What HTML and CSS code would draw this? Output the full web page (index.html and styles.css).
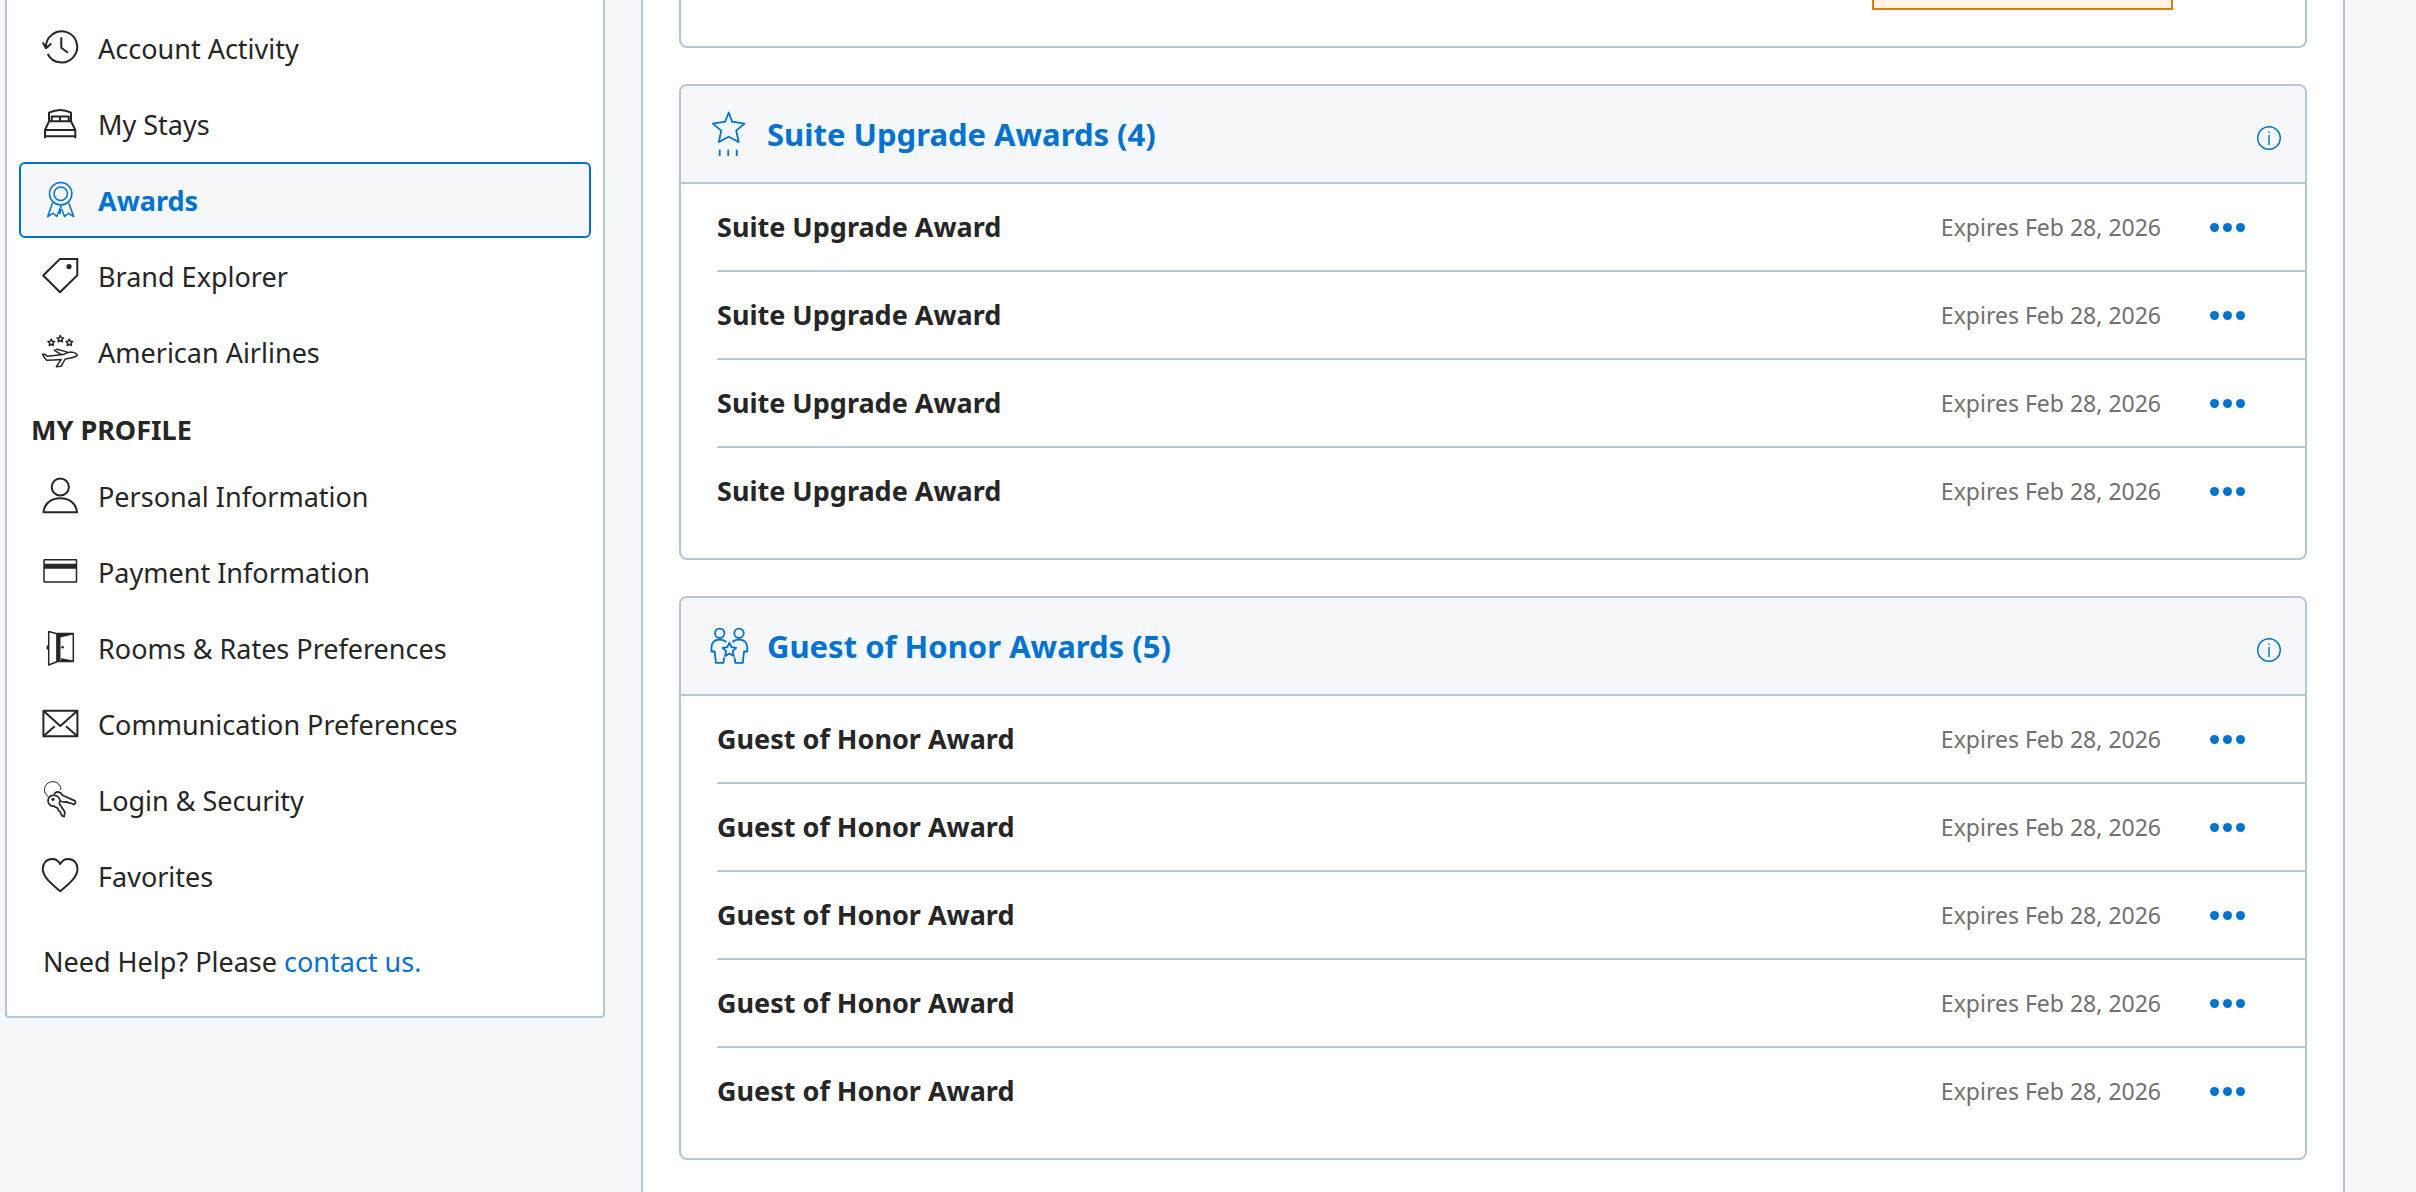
FILE: index.html
```html
<!DOCTYPE html>
<html lang="en">
<head>
    <meta charset="UTF-8">
    <meta name="viewport" content="width=device-width, initial-scale=1.0">
    <title>Awards</title>
    <link rel="stylesheet" href="styles.css">
</head>
<body>
    <div class="page">
        <aside class="sidebar">
            <nav>
                <ul class="nav-list">
                    <li><a class="nav-link" href="#activity">
                        <svg class="nav-icon" viewBox="0 0 36 36"><path d="M4 17.7A15.6 15.6 0 1 1 5.7 24"/><path d="M.8 12.4 4 18.2l5.3-4.8M19.3 7.3v10.4l6.6 5"/></svg>
                        Account Activity</a></li>
                    <li><a class="nav-link" href="#stays">
                        <svg class="nav-icon" viewBox="0 0 36 36"><path d="M7 15.3V6.7q11.5-5.5 22 0v8.6M9.7 15v-4.5h17V15M18 10.5V15M7 15.3h22L33.3 24v8.3M7 15.3 3 24v8.3M3 24h30.300M3 30.300h30.300"/></svg>
                        My Stays</a></li>
                    <li><a class="nav-link active" href="#awards" aria-current="page">
                        <svg class="nav-icon thin" viewBox="0 0 36 36"><circle cx="18.700" cy="11.700" r="11.200"/><circle cx="18.700" cy="11.700" r="6.700"/><path d="M10.500 21 5.700 34.500l5.300-3.200 3.700 3.200 5-11.500M26.800 21l4.900 13.500-5.300-3.200-3.800 3.200-2.900-7.500M18.300 27v4.500l-1.500-1.500"/></svg>
                        Awards</a></li>
                    <li><a class="nav-link" href="#brands">
                        <svg class="nav-icon" viewBox="0 0 36 36"><path d="M18 .9h17.300v16.400L18 34.200 1.200 17.500z"/><circle class="solid" cx="27" cy="8.500" r="2.600"/></svg>
                        Brand Explorer</a></li>
                    <li><a class="nav-link" href="#airlines">
                        <svg class="nav-icon thin" viewBox="0 0 36 36"><path id="tinyStar" d="m9.300 5.100 1 2.200 2.300.2-1.700 1.600.5 2.400-2.100-1.200-2.100 1.200.5-2.400L6 7.500l2.300-.2z"/><use href="#tinyStar" x="9" y="-3.600"/><use href="#tinyStar" x="18"/><path d="M.6 20.300H3l2.700 2L21 20.600q5-2.300 8-2.500 5.200.4 6.300 3.200-3 2.300-12.100 3.700L19 32.300l-4.700.4 4.900-7.300q-8 .6-14.500.9Q2 24 .6 20.300zM19.500 20.700l-7.200-4.300 3-1.100 10.700 3.100"/></svg>
                        American Airlines</a></li>
                </ul>
                <h2 class="nav-heading">MY PROFILE</h2>
                <ul class="nav-list">
                    <li><a class="nav-link" href="#personal">
                        <svg class="nav-icon" viewBox="0 0 36 36"><circle cx="18.300" cy="9" r="8.600"/><path d="M1.500 34.300C2.300 25.500 9 20.300 18.300 20.300S34.200 25.500 35 34.300z"/></svg>
                        Personal Information</a></li>
                    <li><a class="nav-link" href="#payment">
                        <svg class="nav-icon thin" viewBox="0 0 36 36"><rect x="2" y="5.700" width="32.500" height="22.300" rx=".5"/><path class="solid" d="M2 9.700h32.500v5H2z"/></svg>
                        Payment Information</a></li>
                    <li><a class="nav-link" href="#rooms">
                        <svg class="nav-icon thin" viewBox="0 0 36 36"><path d="m6.700 1.500 8.300 2.200v28l-8.300 3.300zM15 3.500h16.300v28H15M5.400 15.500v4"/><path class="solid" d="M14.500 3.500h4v28h-4zM18 3h13.500v1.600L18 7.600zM18 32h13.500v-1.600L18 28z"/><circle class="solid" cx="20.500" cy="17.300" r="1.300"/></svg>
                        Rooms &amp; Rates Preferences</a></li>
                    <li><a class="nav-link" href="#communication">
                        <svg class="nav-icon" viewBox="0 0 36 36"><path d="M1.400 4.800h34v25.400h-34zL18.300 20 35.400 4.800M1.400 30.200 12.700 20.300M35.400 30.200 24 20.300"/></svg>
                        Communication Preferences</a></li>
                    <li><a class="nav-link" href="#login">
                        <svg class="nav-icon" viewBox="0 0 36 36"><path stroke-width="1" d="M6.400 14.800A8.200 8.200 0 1 1 18.900 8"/><path stroke-width="1.700" d="M12 24.200C7.500 24.500 5.300 20.500 6.300 17s4.700-4.500 8-3.200 4.500 4.800 3 8l5.500 8-.6 4.800-2.200-.8-2.200-4.400-1-.4-1.200-2.800zM12 12l2.500-2q4-.5 6 3.300l12.500 5.600.6 2-2 1.700-3-1.500-2-.1-1.700-1.200-2.300.4-4.700-1.200"/><circle class="solid" cx="11" cy="17.300" r="1.600"/></svg>
                        Login &amp; Security</a></li>
                    <li><a class="nav-link" href="#favorites">
                        <svg class="nav-icon" viewBox="0 0 36 36"><path d="M18.200 6C16.500 2.700 13.700.9 10.200.9 4.300.9.800 5.500.8 11c0 7.700 8.200 14.700 17.400 22.200C27.500 25.700 35.500 18.700 35.500 11c0-5.500-3.500-10.100-9.300-10.100-3.500 0-6.300 1.800-8 5.100z"/></svg>
                        Favorites</a></li>
                </ul>
            </nav>
            <p class="help">Need Help? Please <a href="#contact">contact us.</a></p>
        </aside>

        <main class="content">
            <section class="card card-top">
                <div class="notice"></div>
            </section>

            <section class="card">
                <header class="card-header">
                    <svg class="card-icon" viewBox="0 0 40 46"><path d="m19.700 1.500 3.400 9.200 12.400 1.900-8.300 7 2.500 11.400-10-5.300L9.900 31l2.300-11.400-8.300-7 12.300-1.900zM10.700 38.800v6.200M19.200 38.800v6.200M27.700 38.800v6.200"/></svg>
                    <h2 class="card-title">Suite Upgrade Awards (4)</h2>
                    <button class="info" type="button" aria-label="About Suite Upgrade Awards">
                        <svg viewBox="0 0 24 24"><circle cx="12" cy="12" r="11.300"/><path d="M12 9v10M12 5.500v1.500"/></svg>
                    </button>
                </header>
                <ul class="awards">
                    <li class="award">
                        <h3 class="award-name">Suite Upgrade Award</h3>
                        <span class="expires">Expires Feb 28, 2026</span>
                        <button class="more" type="button" aria-label="More options"><i></i><i></i><i></i></button>
                    </li>
                    <li class="award">
                        <h3 class="award-name">Suite Upgrade Award</h3>
                        <span class="expires">Expires Feb 28, 2026</span>
                        <button class="more" type="button" aria-label="More options"><i></i><i></i><i></i></button>
                    </li>
                    <li class="award">
                        <h3 class="award-name">Suite Upgrade Award</h3>
                        <span class="expires">Expires Feb 28, 2026</span>
                        <button class="more" type="button" aria-label="More options"><i></i><i></i><i></i></button>
                    </li>
                    <li class="award">
                        <h3 class="award-name">Suite Upgrade Award</h3>
                        <span class="expires">Expires Feb 28, 2026</span>
                        <button class="more" type="button" aria-label="More options"><i></i><i></i><i></i></button>
                    </li>
                </ul>
            </section>

            <section class="card">
                <header class="card-header">
                    <svg class="card-icon" viewBox="0 -5 40 46"><g id="guest"><circle cx="10.700" cy="5.300" r="4.700"/><path d="M17.300 14.200q-2.300-2.500-6.600-2.500Q2.500 11.700 2.500 20v3.500h3.200L6.900 34.800h7.500l.8-5.500"/></g><use href="#guest" transform="matrix(-1 0 0 1 40.700 0)"/><path d="m20.400 14.700 2.100 4.500 4.700.6-3.500 3.300 1 4.900-4.300-2.400-4.300 2.400 1-4.900-3.500-3.300 4.700-.6z"/></svg>
                    <h2 class="card-title">Guest of Honor Awards (5)</h2>
                    <button class="info" type="button" aria-label="About Guest of Honor Awards">
                        <svg viewBox="0 0 24 24"><circle cx="12" cy="12" r="11.300"/><path d="M12 9v10M12 5.500v1.500"/></svg>
                    </button>
                </header>
                <ul class="awards">
                    <li class="award">
                        <h3 class="award-name">Guest of Honor Award</h3>
                        <span class="expires">Expires Feb 28, 2026</span>
                        <button class="more" type="button" aria-label="More options"><i></i><i></i><i></i></button>
                    </li>
                    <li class="award">
                        <h3 class="award-name">Guest of Honor Award</h3>
                        <span class="expires">Expires Feb 28, 2026</span>
                        <button class="more" type="button" aria-label="More options"><i></i><i></i><i></i></button>
                    </li>
                    <li class="award">
                        <h3 class="award-name">Guest of Honor Award</h3>
                        <span class="expires">Expires Feb 28, 2026</span>
                        <button class="more" type="button" aria-label="More options"><i></i><i></i><i></i></button>
                    </li>
                    <li class="award">
                        <h3 class="award-name">Guest of Honor Award</h3>
                        <span class="expires">Expires Feb 28, 2026</span>
                        <button class="more" type="button" aria-label="More options"><i></i><i></i><i></i></button>
                    </li>
                    <li class="award">
                        <h3 class="award-name">Guest of Honor Award</h3>
                        <span class="expires">Expires Feb 28, 2026</span>
                        <button class="more" type="button" aria-label="More options"><i></i><i></i><i></i></button>
                    </li>
                </ul>
            </section>
        </main>
    </div>
</body>
</html>
```

FILE: styles.css
```css
* {
    box-sizing: border-box;
}

body {
    margin: 0;
    font-family: "Noto Sans", sans-serif;
    font-size: 27px;
    line-height: 36px;
    color: #262626;
    background-color: #f5f7fb;
}

h2, h3, p, ul {
    margin: 0;
    padding: 0;
}

ul {
    list-style: none;
}

a {
    color: #0072d2;
    text-decoration: none;
}

button {
    padding: 0;
    border: none;
    background: none;
    color: #0072d2;
    cursor: pointer;
}

svg {
    display: block;
    fill: none;
    stroke: currentColor;
    stroke-width: 2;
    stroke-linejoin: round;
}

.page {
    display: flex;
    align-items: flex-start;
    gap: 36px;
    min-height: 100vh;
    padding: 0 71px 0 5px;
}

/* Left menu */
.sidebar {
    flex: 0 0 600px;
    padding: 10px 12px 36px;
    background-color: white;
    border: 2px solid #b1c6d8;
    border-top: none;
    border-radius: 0 0 4px 4px;
}

.nav-link {
    display: flex;
    align-items: center;
    gap: 20px;
    height: 76px;
    padding: 2px 21px 0;
    border: 2px solid transparent;
    border-radius: 6px;
    color: #262626;
}

.nav-link.active {
    border-color: #0072d2;
    background-color: #f5f7fb;
    color: #0072d2;
    font-weight: bold;
}

.nav-icon {
    flex: none;
    width: 36px;
    height: 36px;
    margin-bottom: 2px;
    overflow: visible;
}

.thin {
    stroke-width: 1.5;
}

.solid {
    fill: currentColor;
    stroke: none;
}

.nav-heading {
    padding: 22px 12px 10px;
    font-size: 27px;
    line-height: 36px;
}

.help {
    padding: 30px 24px 0;
}

/* Award cards */
.content {
    flex: 1;
    min-height: 100vh;
    padding: 0 36px 32px;
    background-color: white;
    border: 2px solid #b1c6d8;
    border-width: 0 2px;
}

.card {
    margin-bottom: 36px;
    border: 2px solid #b1c6d8;
    border-radius: 8px;
    overflow: hidden;
}

.card:last-child {
    margin-bottom: 0;
}

.card-top {
    display: flex;
    justify-content: flex-end;
    padding: 0 132px 36px;
    border-top: none;
    border-radius: 0 0 8px 8px;
}

.notice {
    width: 301px;
    height: 10px;
    border: 2px solid #d97a1a;
    border-top: none;
    background-color: #fff3e1;
}

.card-header {
    display: flex;
    align-items: center;
    gap: 18px;
    height: 98px;
    padding: 0 24px 0 28px;
    background-color: #f5f7fb;
    border-bottom: 2px solid #b1c6d8;
}

.card-icon {
    flex: none;
    width: 40px;
    height: 46px;
    color: #0072d2;
    stroke-width: 1.8;
}

.card-title {
    flex: 1;
    font-size: 31px;
    line-height: 40px;
    color: #0072d2;
}

.info {
    padding-top: 8px;
}

.info svg {
    width: 24px;
    height: 24px;
    stroke-width: 1.4;
}

.awards {
    padding: 0 0 24px 36px;
}

.award {
    display: flex;
    align-items: center;
    height: 88px;
    padding-right: 60px;
    border-bottom: 2px solid #b1c6d8;
}

.award:last-child {
    height: 86px;
    border-bottom: none;
}

.award-name {
    flex: 1;
    font-size: 27px;
}

.expires {
    margin-right: 49px;
    font-size: 23px;
    color: #707070;
}

.more {
    display: flex;
    gap: 4px;
}

.more i {
    width: 9px;
    height: 9px;
    border-radius: 50%;
    background-color: #0072d2;
}
```
